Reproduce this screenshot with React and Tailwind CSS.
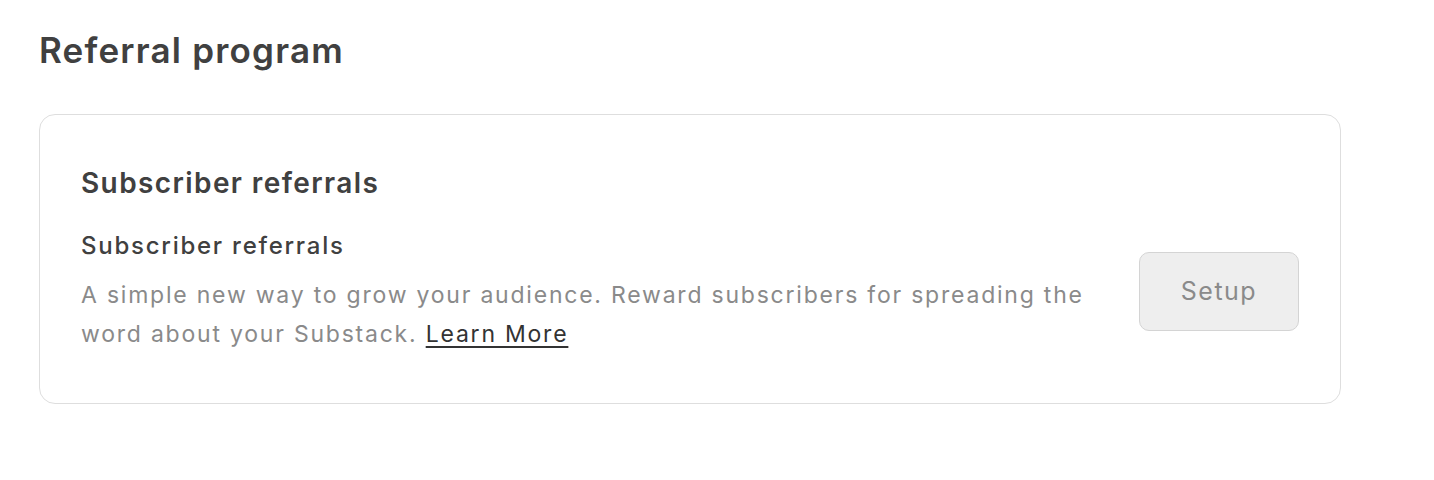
export default function App() {
  return (
    <div className="min-h-[480px] bg-white pl-[39px] pt-[28px] font-['Inter',_'Liberation_Sans',_sans-serif] text-[#404040]">
      <h1 className="text-[35px] font-semibold leading-[44px] tracking-[1.2px]">Referral program</h1>
      <div className="mt-[42px] w-[1302px] rounded-[16px] border border-[#dedede] px-[41px] pb-[49px] pt-[50px]">
        <h2 className="text-[28px] font-semibold leading-[36px] tracking-[1.4px]">Subscriber referrals</h2>
        <div className="mt-[30px] flex items-start justify-between">
          <div className="w-[1015px]">
            <div className="text-[24px] font-medium leading-[30px] tracking-[1.75px]">Subscriber referrals</div>
            <p className="mt-[15px] text-[23px] leading-[39px] tracking-[1.78px] text-[#8a8a8a]">
              A simple new way to grow your audience. Reward subscribers for spreading the word about your Substack.{" "}
              <a href="#" className="text-[#333] underline decoration-[1.5px] underline-offset-[4px]">Learn More</a>
            </p>
          </div>
          <button className="mt-[21px] h-[79px] w-[160px] shrink-0 rounded-[10px] border border-[#d4d4d4] bg-[#eeeeee] text-[25px] tracking-[1.5px] text-[#8a8a8a]">
            Setup
          </button>
        </div>
      </div>
    </div>
  );
}
